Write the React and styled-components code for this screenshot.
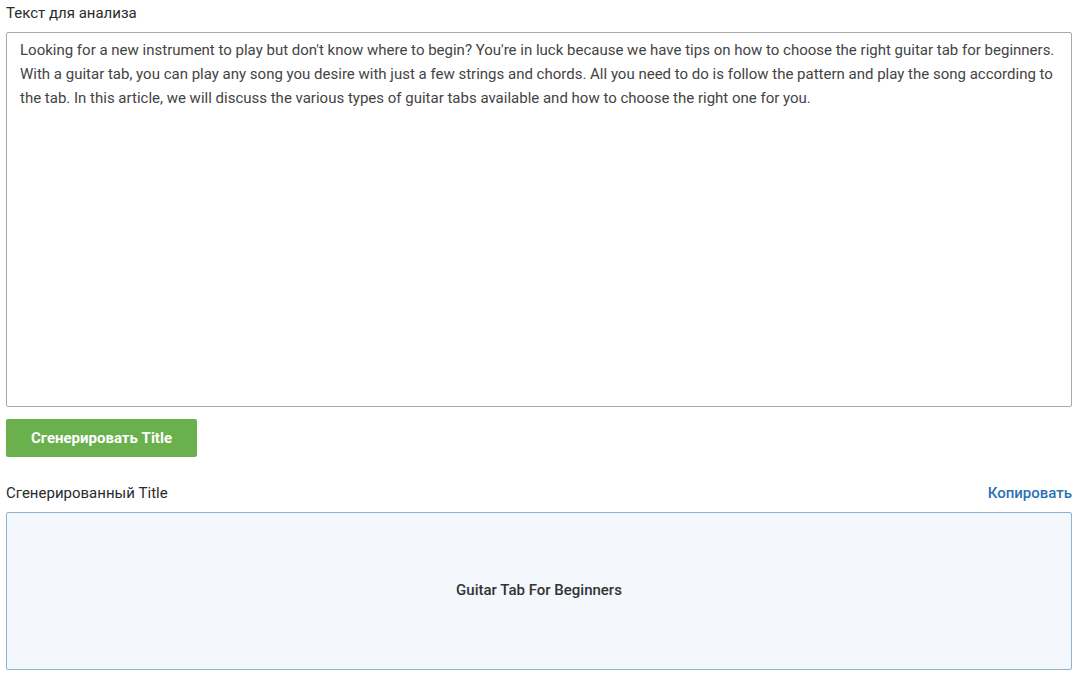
import React from "react";
import styled, { createGlobalStyle } from "styled-components";

const Global = createGlobalStyle`
  html, body { margin: 0; padding: 0; background: #fff; }
  body { font-family: Roboto, "Noto Sans", Arial, sans-serif; }
  * { box-sizing: border-box; }
`;

const Page = styled.div`
  padding: 3px 8px 8px 6px;
  display: flex;
  flex-direction: column;
`;

const Label = styled.div`
  font-size: 15px;
  line-height: 20px;
  font-weight: 400;
  color: #2b2b2b;
  margin-bottom: 9px;
`;

const Area = styled.textarea`
  display: block;
  width: 100%;
  height: 375px;
  resize: none;
  border: 1px solid #a9a9a9;
  border-radius: 2px;
  padding: 5px 13px;
  font-family: Roboto, Arial, sans-serif;
  font-size: 15px;
  line-height: 24px;
  color: #444;
  outline: none;
`;

const Button = styled.button`
  margin-top: 12px;
  width: 191px;
  height: 38px;
  border: none;
  border-radius: 2px;
  background: #6ab04c;
  color: #fff;
  font-family: Roboto, Arial, sans-serif;
  font-size: 15px;
  font-weight: 700;
  cursor: pointer;
  align-self: flex-start;
`;

const ResultHead = styled.div`
  margin-top: 26px;
  display: flex;
  justify-content: space-between;
  align-items: center;
  font-size: 15px;
  line-height: 20px;
  margin-bottom: 9px;
`;

const HeadTitle = styled.span`
  color: #2b2b2b;
  font-weight: 400;
`;

const CopyLink = styled.a`
  color: #2a72b5;
  font-weight: 500;
  text-decoration: none;
  cursor: pointer;
`;

const Result = styled.div`
  height: 158px;
  border: 1px solid #8fb2d1;
  border-radius: 2px;
  background: #f4f7fb;
  display: flex;
  align-items: center;
  justify-content: center;
  padding-bottom: 2px;
  font-size: 15px;
  font-weight: 500;
  color: #333;
`;

const text =
  "Looking for a new instrument to play but don't know where to begin? You're in luck because we have tips on how to choose the right guitar tab for beginners. With a guitar tab, you can play any song you desire with just a few strings and chords. All you need to do is follow the pattern and play the song according to the tab. In this article, we will discuss the various types of guitar tabs available and how to choose the right one for you.";

export default function App() {
  return (
    <>
      <Global />
      <Page>
        <Label>Текст для анализа</Label>
        <Area defaultValue={text} spellCheck={false} />
        <Button>Сгенерировать Title</Button>
        <ResultHead>
          <HeadTitle>Сгенерированный Title</HeadTitle>
          <CopyLink>Копировать</CopyLink>
        </ResultHead>
        <Result>Guitar Tab For Beginners</Result>
      </Page>
    </>
  );
}
